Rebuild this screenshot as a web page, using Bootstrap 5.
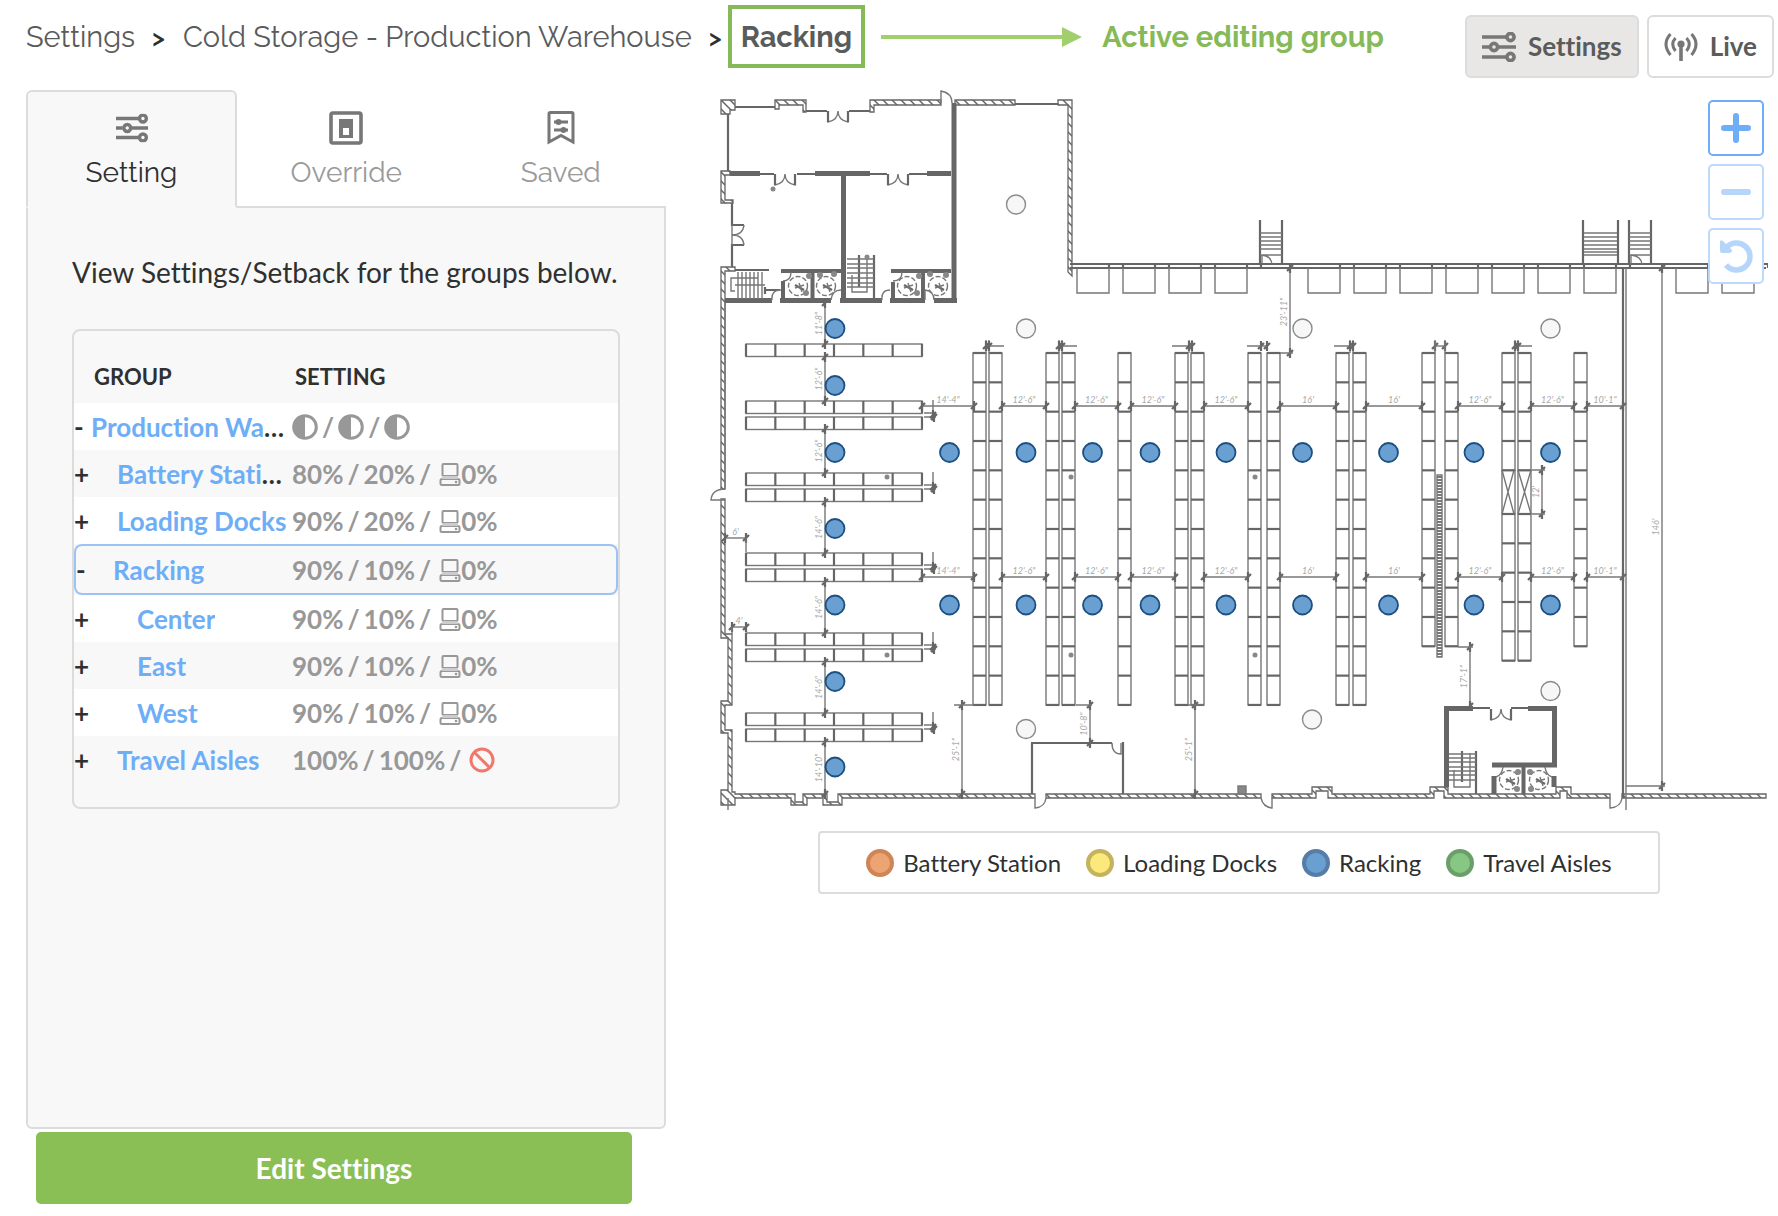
<!DOCTYPE html>
<html lang="en">
<head>
<meta charset="utf-8">
<meta name="viewport" content="width=device-width, initial-scale=1">
<title>Cold Storage - Production Warehouse</title>
<link href="https://cdn.jsdelivr.net/npm/bootstrap@5.3.0/dist/css/bootstrap.min.css" rel="stylesheet">
<style>
  body { font-family: Lato, "Liberation Sans", sans-serif; color: #2f3030; background: #fff; }
  body, button { font-variant-ligatures: none; }
  a { text-decoration: none; }

  .topbar { padding: 5px 4px 0 26px; min-height: 84px; }
  .crumbs { font-family: Raleway, Lato, sans-serif; font-size: 29px; line-height: 36px; }
  .crumbs .breadcrumb-item, .crumbs a { color: #5a5b5b; }
  .crumbs .breadcrumb-item + .breadcrumb-item { padding-left: 0; }
  .crumbs .breadcrumb-item + .breadcrumb-item::before { content: ">"; color: #2f3030; font-weight: 600; font-size: 25px; padding: 0 18px 0 17px; }
  .crumbs .breadcrumb-item.current::before { padding: 0 6px 0 17px; }
  .current-box { border: 4px solid #86b957; padding: 10px 9px 9px; font-weight: 700; }
  .callout { color: #86b957; font-family: Raleway, Lato, sans-serif; font-size: 29px; line-height: 36px; font-weight: 700; }
  .modes { padding-top: 10px; }
  .mode-btn { height: 63px; border: 2px solid #dcdcdc; border-radius: 6px; font-size: 26px; font-weight: 700; color: #5a5b5b; padding: 0 15px; background: #fff; }
  .mode-btn.active, .mode-btn:hover { background: #e9e6e6; border-color: #dcdcdc; color: #5a5b5b; }

  .side { flex: 0 0 640px; margin-left: 26px; padding-top: 6px; }
  .side .nav-tabs { border-bottom: 0; margin-bottom: -2px; }
  .side .nav-item { flex: 1 1 0; padding-left: 4px; }
  .side .nav-item.first { flex: 0 0 211px; padding-left: 0; }
  .side .nav-link { width: 100%; height: 118px; border: 2px solid transparent; border-radius: 6px 6px 0 0; margin: 0; padding: 0; font-family: Raleway, Lato, sans-serif; font-size: 28px; line-height: 34px; color: #9a9a9a; }
  .side .nav-link.active { background: #f8f8f8; border-color: #dcdcdc #dcdcdc #f8f8f8; color: #2f3030; }
  .side .nav-link svg { display: block; margin: 0 auto 9px; }
  .side-panel { border: 2px solid #dcdcdc; border-radius: 0 0 6px 6px; background: #f8f8f8; min-height: 923px; padding: 46px 44px 0; }
  .side-panel p { font-size: 28px; line-height: 36px; margin-bottom: 39px; }
  .group-card { border: 2px solid #dcdcdc; border-radius: 8px; padding: 20px 0 24px; }

  .groups { width: 100%; table-layout: fixed; border-collapse: separate; border-spacing: 0; font-weight: 700; font-size: 26px; line-height: 30px; }
  .groups th, .groups td { height: 47px; padding: 0; vertical-align: middle; font-weight: 700; }
  .groups thead th { height: 52px; font-size: 22px; padding-left: 20px; }
  .groups thead th + th { padding-left: 7px; }
  .groups tbody tr:nth-child(odd) > * { background: #fff; }
  .groups tbody tr:nth-child(even) > * { background: #f8f8f8; }
  .groups tbody td { padding-left: 4px; color: #989898; white-space: nowrap; }
  .groups .levels, .groups .levels > span { display: flex; align-items: center; }
  .groups .levels { gap: 4px; }
  .groups a { color: #6eaef6; }
  .groups .chosen > * { height: 51px; border: 2px solid #9dc2f6; }
  .groups .chosen th { border-right: 0; border-radius: 8px 0 0 8px; }
  .groups .chosen td { border-left: 0; border-radius: 0 8px 8px 0; }
  .groups svg { flex: none; }
  .twist { border: 0; background: none; padding: 0; flex: 0 0 17px; text-align: left; font-weight: 700; line-height: 30px; color: #2f3030; }
  .lvl1 { padding-left: 26px; }
  .lvl2 { padding-left: 46px; }
  .lvl-open { padding-left: 20px; }

  .edit-btn { display: block; width: 596px; height: 72px; margin: 3px 0 0 10px; border-radius: 5px; background: #8abf56; color: #fff; font-size: 28px; font-weight: 700; border: 0; }
  .edit-btn:hover { background: #7db04b; color: #fff; }

  .map-col { margin: 0 10px 0 44px; min-width: 0; }
  .plan { display: block; width: 100%; height: auto; }
  .zoomers { position: absolute; top: 16px; right: 4px; }
  .zoom-btn { width: 56px; height: 56px; padding: 0; border: 2px solid #6eaef6; border-radius: 5px; background: #fff; }
  .zoom-btn:disabled { border-color: #bbdafc; background: #fff; opacity: 1; }
  .legend-box { border: 2px solid #dcdcdc; border-radius: 4px; padding: 0 46px; min-height: 63px; margin-top: 21px; column-gap: 25px; font-size: 24px; line-height: 30px; }
  .legend-box li { display: flex; align-items: center; gap: 9px; }
  .dot { width: 28px; height: 28px; border-radius: 50%; border: 4px solid; }
  .dot-battery { background: #eba472; border-color: #d08556; }
  .dot-docks { background: #fbe97c; border-color: #c4b25c; }
  .dot-racking { background: #6a9fd1; border-color: #557da5; }
  .dot-aisles { background: #88c684; border-color: #6b9f6a; }

  .ln { fill: none; stroke: #777; stroke-width: 1.4; }
  .md { fill: none; stroke: #666; stroke-width: 2.2; }
  .wall { fill: none; stroke: #666; stroke-width: 5; }
  .hatched { fill: url(#hatch); stroke: #666; stroke-width: 1.3; }
  .dimtext { font: italic 9px Lato, sans-serif; fill: #a8a8a8; text-anchor: middle; }
</style>
<script src="https://cdn.jsdelivr.net/npm/bootstrap@5.3.0/dist/js/bootstrap.bundle.min.js"></script>
</head>
<body>

<svg width="0" height="0" class="position-absolute" aria-hidden="true">
  <symbol id="i-sliders" viewBox="0 0 34 30"><g fill="none" stroke="#777" stroke-width="3.6"><path d="M0 5H24M0 15H7M16 15H34M0 25H24"/><circle cx="28.500" cy="5" r="3.600"/><circle cx="12" cy="15" r="3.600"/><circle cx="28.500" cy="25" r="3.600"/></g></symbol>
  <symbol id="i-half" viewBox="0 0 26 26"><circle cx="13" cy="13" r="11.300" fill="none" stroke="#989898" stroke-width="3"/><path d="M13 1a12 12 0 0 0 0 24z" fill="#989898"/></symbol>
  <symbol id="i-pc" viewBox="0 0 22 24"><g fill="none" stroke="#989898" stroke-width="2"><rect x="3.500" y="2" width="15" height="12" rx="1"/><rect x="1.500" y="17" width="19" height="6" rx="1.500"/></g><path d="M3 14H19V17H3z" fill="#ccc"/><circle cx="17" cy="20" r="1.300" fill="#989898"/></symbol>
</svg>

<header class="topbar d-flex align-items-start">
  <div class="d-flex align-items-center">
    <nav class="crumbs" aria-label="breadcrumb">
      <ol class="breadcrumb mb-0 align-items-center flex-nowrap text-nowrap">
        <li class="breadcrumb-item"><a href="#">Settings</a></li>
        <li class="breadcrumb-item"><a href="#">Cold Storage - Production Warehouse</a></li>
        <li class="breadcrumb-item current d-flex align-items-center" aria-current="page"><span class="current-box">Racking</span></li>
      </ol>
    </nav>
    <svg class="mx-3" width="201" height="22" viewBox="0 0 201 22" aria-hidden="true"><path d="M0 11H184" stroke="#a0cf6c" stroke-width="4"/><path d="M181 1L201 11L181 21z" fill="#a0cf6c"/></svg>
    <span class="callout text-nowrap ms-1">Active editing group</span>
  </div>
  <div class="modes d-flex gap-2 ms-auto">
    <button class="btn mode-btn active d-flex align-items-center gap-2" type="button">
      <svg width="34" height="30" class="me-1"><use href="#i-sliders"/></svg>Settings
    </button>
    <button class="btn mode-btn d-flex align-items-center gap-2" type="button">
      <svg width="34" height="30" viewBox="0 0 34 30" class="me-1"><g fill="none" stroke="#777" stroke-width="3"><path d="M6.500 2Q-2.500 12 6.500 23M27.500 2Q36.500 12 27.500 23M11.500 6Q6 12 11.500 19M22.500 6Q28 12 22.500 19"/><path d="M17 12V29" stroke-width="3.600"/></g><circle cx="17" cy="12" r="3.600" fill="#777"/></svg>Live
    </button>
  </div>
</header>

<main class="d-flex align-items-start">
  <aside class="side">
    <ul class="nav nav-tabs flex-nowrap" role="tablist">
      <li class="nav-item first"><button class="nav-link active" type="button" role="tab">
        <svg width="34" height="38" viewBox="0 -5 34 40"><use href="#i-sliders" width="34" height="30"/></svg>Setting</button></li>
      <li class="nav-item"><button class="nav-link" type="button" role="tab">
        <svg width="34" height="38" viewBox="0 0 34 38"><rect x="2" y="4" width="30" height="30" rx="2" fill="none" stroke="#777" stroke-width="3.600"/><rect x="10" y="10" width="14" height="19" fill="#777"/><rect x="14" y="19" width="6" height="7" fill="#fff"/></svg>Override</button></li>
      <li class="nav-item"><button class="nav-link" type="button" role="tab">
        <svg width="34" height="38" viewBox="0 0 34 38"><path d="M5 4.500Q5 3.500 6.500 3.500H27.500Q29 3.500 29 4.500V33L17 26.500L5 33z" fill="none" stroke="#777" stroke-width="3"/><path d="M10 13H24M10 21H24" stroke="#777" stroke-width="3"/><circle cx="14.500" cy="13" r="3" fill="#777"/><circle cx="19.500" cy="21" r="3" fill="#777"/></svg>Saved</button></li>
    </ul>
    <section class="side-panel">
      <p>View Settings/Setback for the groups below.</p>
      <div class="group-card">
        <table class="groups">
          <colgroup><col style="width:214px"><col></colgroup>
          <thead><tr><th scope="col">GROUP</th><th scope="col">SETTING</th></tr></thead>
          <tbody id="rows"></tbody>
        </table>
      </div>
    </section>
    <button class="btn edit-btn" type="button">Edit Settings</button>
  </aside>

  <section class="map-col flex-grow-1 position-relative">
    <svg class="plan" viewBox="710 84 1058 726" role="img" aria-label="Warehouse floor plan">
      <defs>
        <pattern id="hatch" width="9" height="9" patternUnits="userSpaceOnUse"><rect width="9" height="9" fill="#fff"/><path d="M0 0L9 9M-2 7L2 11M7 -2L11 2" stroke="#666" stroke-width="1.500"/></pattern>
        <g id="ddoor"><path class="ln" d="M1 0V11Q11 9 11 0Q11 9 21 11V0"/><path class="md" d="M1 0V11M21 0V11"/></g>
        <g id="wc"><circle class="ln" r="9.500" stroke-dasharray="5 2"/><path class="md" d="M-3 -1L6 4"/><path class="ln" d="M-3 2L6 -1M1 -3L4 6"/></g>
      </defs>
      <g class="hatched">
        <path d="M721 100H735V110H730V114H721z"/><path d="M775 109V100H806V112H803V105H779V109z"/><path d="M870 112V100H941V105H874V112z"/><path d="M955 100H1015V105H955z"/>
        <path d="M1058 100H1072V276L1068 272V105H1058z"/>
        <path d="M721 171H730V175H725V200H733V203H721z"/><path d="M721 267H735V271H725V489H721z"/><path d="M721 499H725V634H732V705H725V730H732V792H735V794H795V802H803V794H827V802H838V794H1035V798H842V805H823V798H807V805H791V798H735V805H721V790H728V733H721V701H728V638H721z"/>
        <path d="M1046 794H1261V798H1046z"/><path d="M1272 794H1312V787H1332V794H1430V787H1448V794H1556V787H1571V794H1610V798H1567V791H1560V798H1444V791H1434V798H1328V791H1316V798H1272z"/><path d="M1622 794H1766V798H1622z"/>
      </g>
      <g class="md">
        <path d="M735 107H775M806 111H827M849 111H870M728 114V171M760 174H774M797 174H815M870 174H887M909 174H927"/>
        <path d="M732 203V225H744M744 245H732V267M735 270H769M765 287V294M765 290H780"/>
        <path d="M1015 104H1058M1070 264H1766M1070 268H1766M1031 743H1112M1032 743V794M1123 742V794"/>
        <path d="M1473 708H1490M1511 708H1528M1623 268V798"/>
        <path d="M859 255V287M874 255V300M1462 751V782M1476 751V794M1583 220V264M1618 220V264M1629 220V264M1651 220V264M1260 220V264M1282 220V264"/>
      </g>
      <g class="wall">
        <path d="M954 103V303M843.500 175V303M730 173.500H760M815 173.500H870M927 173.500H951"/>
        <path d="M725 300.500H772M780 300.500H831M840 300.500H882M890 300.500H925M934 300.500H957"/>
        <path d="M1446.500 706V787M1554.500 706V767M1444 708.500H1473M1528 708.500H1557M1492 765H1557M1494 776V794M1554 776V787"/>
        <path stroke-width="4" d="M781 271H841M891 271H951M783 281V300M812.500 271V300M893 282V300M923 271V300M1523.500 765V794"/>
      </g>
      <use href="#ddoor" x="827" y="111"/><use href="#ddoor" x="774" y="174"/><use href="#ddoor" x="887" y="174"/><use href="#ddoor" x="1490" y="709"/>
      <g class="ln">
        <path d="M732 225V245M744 225Q743 235 732 235Q743 235 744 245M941 103V91Q952 93 952 103M772 300Q771 290 781 290M831 300Q832 290 841 290M882 300Q881 290 890 290M925 300V290Q934 291 934 300M791 272Q791 281 783 281M902 272Q902 281 893 281"/>
        <path d="M725 489Q712 489 711 500H725M1035 798V808Q1045 807 1046 798M1261 798Q1263 807 1272 808V798M1610 798V808Q1621 807 1622 798M1112 743Q1112 754 1121 754V743M1503 767Q1502 775 1496 777M1545 767Q1546 775 1552 777"/>
        <path d="M738 272V299M742 272V299M746 272V299M750 272V299M754 272V299M758 272V299M762 272V299M735 285H765M758 278H731V291H735"/>
        <path d="M847 259H874M847 264H874M847 268H874M847 273H874M847 278H874M847 283H874M847 287H874M852 275V292H867V258"/>
        <path d="M1449 754H1476M1449 758H1476M1449 762H1476M1449 767H1476M1449 771H1476M1449 775H1476M1449 780H1476M1454 770V787H1470V753"/>
        <path d="M1584 233H1617M1584 237H1617M1584 241H1617M1584 245H1617M1584 249H1617M1584 252H1617M1584 255H1617M1629 233H1651M1629 237H1651M1629 241H1651M1629 245H1651M1629 249H1651M1629 255H1651M1631 264V255Q1641 256 1642 264M1260 233H1282M1260 237H1282M1260 241H1282M1260 245H1282M1260 249H1282M1260 255H1282M1262 264V255Q1271 256 1272 264"/>
        <path d="M1626 268V810M728 798V811M1437 475H1442V657H1437zM1502 470L1514 514M1514 470L1502 514M1518 470L1531 514M1531 470L1518 514"/>
        <rect x="1238" y="786" width="8" height="8" fill="#888"/><path d="M725 303V489"/>
      </g>
      <path d="M1439.500 476V657" stroke="#777" stroke-width="5" stroke-dasharray="2 1"/>
      <use href="#wc" x="798" y="286"/><use href="#wc" x="826" y="286"/><use href="#wc" x="907" y="286"/><use href="#wc" x="938" y="286"/><use href="#wc" x="1509" y="780"/><use href="#wc" x="1539" y="780"/>
      <g fill="#888"><circle cx="773" cy="189" r="2.500"/><circle cx="867" cy="257" r="2.500"/><circle cx="887" cy="477" r="2.500"/><circle cx="887" cy="655" r="2.500"/><circle cx="1071" cy="477" r="2.500"/><circle cx="1071" cy="655" r="2.500"/><circle cx="1255" cy="477" r="2.500"/><circle cx="1255" cy="655" r="2.500"/><circle cx="809" cy="276" r="3"/><circle cx="806" cy="293" r="3"/><circle cx="834" cy="274" r="3"/><circle cx="820" cy="275" r="3"/><circle cx="919" cy="276" r="3"/><circle cx="917" cy="293" r="3"/><circle cx="946" cy="275" r="3"/><circle cx="930" cy="274" r="3"/><circle cx="1518" cy="772" r="3"/><circle cx="1530" cy="772" r="3"/><circle cx="1517" cy="789" r="3"/><circle cx="1531" cy="789" r="3"/></g>
      <g id="drawn"></g>
    </svg>
    <div class="zoomers d-flex flex-column gap-2">
      <button class="btn zoom-btn" type="button" aria-label="Zoom in"><svg width="30" height="30" viewBox="0 0 30 30"><path d="M3 15H27M15 3V27" stroke="#6eaef6" stroke-width="6" stroke-linecap="round"/></svg></button>
      <button class="btn zoom-btn" type="button" aria-label="Zoom out" disabled><svg width="30" height="30" viewBox="0 0 30 30"><path d="M3 15H27" stroke="#b5d6fa" stroke-width="6" stroke-linecap="round"/></svg></button>
      <button class="btn zoom-btn" type="button" aria-label="Reset view" disabled><svg width="34" height="34" viewBox="0 0 34 34"><path d="M7 9A13.500 13.500 0 1 1 7 26" fill="none" stroke="#b5d6fa" stroke-width="5.500"/><path d="M1 3Q1 0 4 2L13 11Q13 14 10 14H3Q1 14 1 12z" fill="#b5d6fa"/></svg></button>
    </div>
    <div class="d-flex justify-content-center">
      <ul class="legend-box list-unstyled d-flex flex-wrap align-items-center mb-0">
        <li><span class="dot dot-battery"></span>Battery Station</li>
        <li><span class="dot dot-docks"></span>Loading Docks</li>
        <li><span class="dot dot-racking"></span>Racking</li>
        <li><span class="dot dot-aisles"></span>Travel Aisles</li>
      </ul>
    </div>
  </section>
</main>

<script>
  // Group table
  const half = '<svg width="26" height="26"><use href="#i-half"/></svg>';
  const pc = '<svg width="22" height="24"><use href="#i-pc"/></svg>';
  const off = '<svg class="ms-1" width="26" height="26" viewBox="0 0 26 26"><g fill="none" stroke="#f0776c" stroke-width="3"><circle cx="13" cy="13" r="11"/><path d="M5 5L21 21"/></g></svg>';
  const slash = '<span>/</span>';
  const levels = (a, b, last) => `<span>${a}</span>${slash}<span>${b}</span>${slash}<span>${last}</span>`;
  const zero = `<span class="d-flex align-items-center ms-1">${pc}0%</span>`;
  const groups = [
    ['-', 'Production Warehouse', '', levels(half, half, half)],
    ['+', 'Battery Station', 'lvl1', levels('80%', '20%', zero)],
    ['+', 'Loading Docks', 'lvl1', levels('90%', '20%', zero)],
    ['-', 'Racking', 'lvl-open', levels('90%', '10%', zero)],
    ['+', 'Center', 'lvl2', levels('90%', '10%', zero)],
    ['+', 'East', 'lvl2', levels('90%', '10%', zero)],
    ['+', 'West', 'lvl2', levels('90%', '10%', zero)],
    ['+', 'Travel Aisles', 'lvl1', levels('100%', '100%', off)]
  ];
  document.getElementById('rows').innerHTML = groups.map(([sign, name, lvl, value]) =>
    `<tr class="${name === 'Racking' ? 'chosen' : ''}"><th scope="row"><div class="d-flex"><button class="twist" type="button" aria-label="Toggle ${name}">${sign}</button><span class="text-truncate ${lvl}"><a href="#">${name}</a></span></div></th><td><div class="levels">${value}</div></td></tr>`).join('');

  // Floor plan: racks, dock doors, dimensions, sensors
  const bay = 29.33;
  let out = '';
  const rackDown = (x, y, n) => {
    out += `<rect class="ln" x="${x}" y="${y}" width="13" height="${n * bay}"/>`;
    for (let i = 0; i <= n; i++) out += `<path class="md" d="M${x} ${y + i * bay}h13"/>`;
  };
  const rackAcross = y => {
    out += `<rect class="ln" x="746" y="${y}" width="176" height="12.500"/>`;
    for (let i = 0; i <= 6; i++) out += `<path class="md" d="M${746 + i * bay} ${y}v12.500"/>`;
  };
  const tick = (x, y) => `<path class="md" d="M${x - 3} ${y + 3}L${x + 3} ${y - 3}M${x} ${y - 5}v10"/>`;
  const dimH = (x1, x2, y, label) => {
    out += `<path class="ln" d="M${x1} ${y}H${x2}"/>${tick(x1, y)}${tick(x2, y)}`;
    if (label) out += `<text class="dimtext" x="${(x1 + x2) / 2}" y="${y - 3}">${label}</text>`;
  };
  const dimV = (x, y1, y2, label, at) => {
    const y = at || (y1 + y2) / 2;
    out += `<path class="ln" d="M${x} ${y1}V${y2}"/>${tick(x, y1)}${tick(x, y2)}<text class="dimtext" transform="translate(${x - 3} ${y}) rotate(-90)">${label}</text>`;
  };

  [344, 401, 417, 473, 489, 553, 569, 633, 649, 713, 729].forEach(rackAcross);
  [973, 989, 1046, 1062, 1118, 1175, 1191, 1248, 1267, 1336, 1353].forEach(x => rackDown(x, 353, 12));
  [1422, 1445, 1574].forEach(x => rackDown(x, 353, 10));
  [1502, 1518].forEach(x => { rackDown(x, 353, 4); rackDown(x, 514, 5); out += `<path class="ln" d="M${x} 470V514M${x + 13} 470V514"/>`; });

  [1077, 1123, 1169, 1215, 1308, 1354, 1400, 1446, 1492, 1538, 1584, 1676, 1722].forEach(x => {
    out += `<path class="ln" d="M${x} 268V293h32V268"/><path class="md" d="M${x + 32} 268v-4h14v4"/>`;
  });

  [406, 577].forEach(y => [[922, 974, "14'-4\""], [1002, 1046, "12'-6\""], [1075, 1118, "12'-6\""], [1131, 1175, "12'-6\""], [1204, 1248, "12'-6\""], [1280, 1336, "16'"], [1366, 1422, "16'"], [1458, 1502, "12'-6\""], [1531, 1574, "12'-6\""], [1587, 1623, "10'-1\""]].forEach(([a, b, t]) => dimH(a, b, y, t)));
  [[303, 344, "11'-8\""], [357, 401, "12'-6\""], [429, 473, "12'-6\""], [502, 553, "14'-6\""], [582, 633, "14'-6\""], [662, 713, "14'-6\""], [742, 794, "14'-10\""]].forEach(([a, b, t]) => dimV(825, a, b, t));
  dimV(1290, 268, 353, "23'-11\"", 312);
  dimV(962, 705, 794, "25'-1\"");
  dimV(1195, 705, 794, "25'-1\"");
  dimV(1090, 705, 743, "10'-8\"");
  dimV(1470, 647, 706, "17'-1\"");
  dimV(1542, 470, 514, "12'");
  dimV(1662, 268, 786, "146'");
  dimH(725, 746, 538, "6'");
  dimH(732, 746, 627, "4'");
  out += '<path class="ln" d="M746 538V552M732 627V634M1626 786H1665M954 705H974M1076 705H1092M1280 353H1293M1532 470H1545M1532 514H1545M1458 647H1473M1188 705H1204"/>';

  [415, 487, 567, 647, 727].forEach(y => {
    out += `<path class="ln" d="M924 ${y - 2}H936M924 ${y + 2}H936M933 ${y - 15}V${y + 6}"/>${tick(933, y)}${tick(934, y + 2)}`;
  });
  [[987, 1004], [1060, 1077], [1190, 1172], [1351, 1334], [1516, 1532]].forEach(([x, to]) => {
    out += `<path class="ln" d="M${x - 1} 340V353M${x + 2} 340V353M${x} 346H${to}"/>${tick(x - 1, 346)}${tick(x + 2, 346)}`;
  });
  dimH(1261, 1267, 346); dimH(1435, 1445, 346);
  out += '<path class="ln" d="M1247 346H1261M1435 340V353M1445 340V353"/>';

  const sensor = (x, y, on) => {
    out += `<circle cx="${x}" cy="${y}" r="9.500" fill="${on ? '#6a9fd1' : '#f7f7f7'}" stroke="${on ? '#1c4f82' : '#8a8a8a'}" stroke-width="${on ? 1.8 : 1.4}"/>`;
  };
  [328.5, 385.5, 452.5, 528.5, 605, 681.5, 767].forEach(y => sensor(835, y, true));
  [949.5, 1026, 1092.5, 1150, 1226, 1302.5, 1388.5, 1474, 1550.5].forEach(x => { sensor(x, 452.5, true); sensor(x, 605, true); });
  [[1016, 204.5], [1026, 328.5], [1302.5, 328.5], [1550.5, 328.5], [1026, 729], [1312, 719.5], [1550.5, 691]].forEach(([x, y]) => sensor(x, y, false));
  document.getElementById('drawn').innerHTML = out;
</script>
</body>
</html>
